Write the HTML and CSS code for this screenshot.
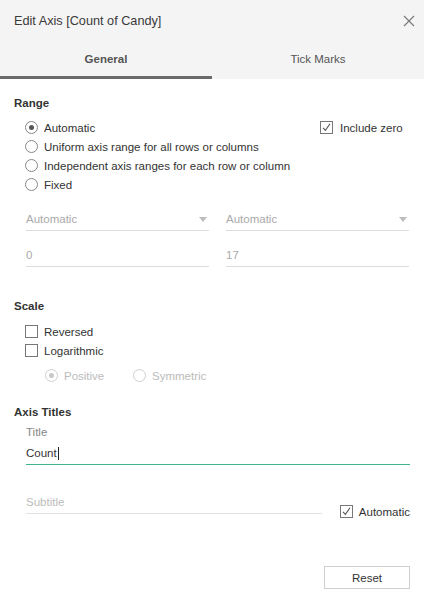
FILE: index.html
```html
<!DOCTYPE html>
<html>
<head>
<meta charset="utf-8">
<link rel="stylesheet" href="styles.css">
</head>
<body>
<div class="dialog">
  <div class="header">
    <div class="titlebar">
      <span class="title">Edit Axis [Count of Candy]</span>
      <svg class="close" width="12" height="12" viewBox="0 0 12 12"><path d="M1 1 L11 11 M11 1 L1 11" stroke="#777" stroke-width="1.1" fill="none"/></svg>
    </div>
    <div class="tabs">
      <div class="tab active">General</div>
      <div class="tab">Tick Marks</div>
    </div>
  </div>
  <div class="content">
    <div class="section-title range-title">Range</div>
    <div class="options">
      <div class="row">
        <span class="radio checked"></span><span>Automatic</span>
        <span class="right-check"><span class="checkbox checked"><svg width="11" height="11" viewBox="0 0 11 11"><path d="M2 5.8 L4.4 8.4 L9 1.8" stroke="#555" stroke-width="1.1" fill="none"/></svg></span><span>Include zero</span></span>
      </div>
      <div class="row"><span class="radio"></span><span>Uniform axis range for all rows or columns</span></div>
      <div class="row"><span class="radio"></span><span>Independent axis ranges for each row or column</span></div>
      <div class="row"><span class="radio"></span><span>Fixed</span></div>
    </div>
    <div class="field-row first">
      <div class="field dropdown"><span>Automatic</span><span class="arrow"></span></div>
      <div class="field dropdown"><span>Automatic</span><span class="arrow"></span></div>
    </div>
    <div class="field-row second">
      <div class="field">0</div>
      <div class="field">17</div>
    </div>

    <div class="section-title scale-title">Scale</div>
    <div class="options checks">
      <div class="row"><span class="checkbox"></span><span>Reversed</span></div>
      <div class="row"><span class="checkbox"></span><span>Logarithmic</span></div>
    </div>
    <div class="sub-radios">
      <span class="sub-opt"><span class="radio checked disabled"></span><span>Positive</span></span>
      <span class="sub-opt"><span class="radio disabled"></span><span>Symmetric</span></span>
    </div>

    <div class="section-title axis-title">Axis Titles</div>
    <div class="label">Title</div>
    <div class="field focused">Count<span class="caret"></span></div>
    <div class="subtitle-row">
      <div class="field subtitle">Subtitle</div>
      <span class="auto-check"><span class="checkbox checked"><svg width="11" height="11" viewBox="0 0 11 11"><path d="M2 5.8 L4.4 8.4 L9 1.8" stroke="#555" stroke-width="1.1" fill="none"/></svg></span><span>Automatic</span></span>
    </div>
    <div class="footer">
      <button class="reset">Reset</button>
    </div>
  </div>
</div>
</body>
</html>
```

FILE: styles.css
```css
* { box-sizing: border-box; }
html, body { margin: 0; padding: 0; background: #fff; }
body {
  font-family: "Liberation Sans", Arial, sans-serif;
  font-size: 11.5px;
  color: #333;
}
.dialog { width: 424px; height: 600px; display: flex; flex-direction: column; }
.header { background: #f4f4f4; }
.titlebar {
  height: 41px;
  display: flex;
  align-items: center;
  justify-content: space-between;
  padding: 0 9px 0 14px;
}
.title { font-size: 12.7px; color: #3a3a3a; }
.close { display: block; }
.tabs { display: flex; height: 38px; }
.tab {
  flex: 1;
  display: flex;
  align-items: center;
  justify-content: center;
  color: #555;
  border-bottom: 3px solid transparent;
}
.tab.active { font-weight: bold; border-bottom-color: #6a6a6a; }

.content { padding: 0 14px; display: flex; flex-direction: column; }
.section-title { font-weight: bold; line-height: 16px; height: 16px; color: #333; }
.range-title { margin-top: 16px; }
.options { margin-top: 7px; padding-left: 11px; }
.row { display: flex; align-items: center; height: 19px; }
.row > span:nth-child(2) { margin-left: 6px; }

.radio {
  width: 13px; height: 13px;
  border: 1px solid #888;
  border-radius: 50%;
  display: inline-flex;
  align-items: center;
  justify-content: center;
  flex: none;
  background: #fff;
}
.radio.checked::after {
  content: "";
  width: 5px; height: 5px;
  border-radius: 50%;
  background: #555;
}
.radio.disabled { border-color: #cfcfcf; }
.radio.disabled.checked::after { background: #c8c8c8; }

.checkbox {
  width: 13px; height: 13px;
  border: 1px solid #777;
  display: inline-flex;
  align-items: center;
  justify-content: center;
  flex: none;
  background: #fff;
}
.checkbox svg { display: block; }

.right-check {
  margin-left: auto;
  width: 90px;
  display: flex;
  align-items: center;
  gap: 7px;
}

.field-row {
  display: grid;
  grid-template-columns: 183px 183px;
  column-gap: 17px;
  padding-left: 12px;
}
.field-row.first { margin-top: 14px; }
.field-row.second { margin-top: 13px; }
.field {
  height: 23px;
  line-height: 22px;
  border-bottom: 1px solid #dcdcdc;
  color: #aaa;
}
.dropdown { display: flex; align-items: center; justify-content: space-between; padding-right: 2px; }
.arrow {
  width: 0; height: 0;
  border-left: 4px solid transparent;
  border-right: 4px solid transparent;
  border-top: 5px solid #bdbdbd;
}

.scale-title { margin-top: 31px; }
.checks { margin-top: 8px; }
.sub-radios { margin-top: 6px; padding-left: 31px; display: flex; align-items: center; height: 19px; color: #bbb; }
.sub-opt { display: flex; align-items: center; gap: 6px; }
.sub-opt:first-child { width: 88px; }

.axis-title { margin-top: 19px; }
.label { margin-top: 4px; line-height: 16px; padding-left: 12px; color: #888; }
.field.focused {
  margin-top: 2px;
  margin-left: 12px;
  border-bottom-color: #3db68e;
  color: #333;
  display: flex;
  align-items: center;
}
.caret { width: 1px; height: 13px; background: #222; margin-left: 1px; }

.subtitle-row { margin-top: 26px; display: flex; align-items: flex-start; padding-left: 12px; }
.field.subtitle { width: 296px; color: #bbb; border-bottom-color: #e3e3e3; }
.auto-check { margin-left: 18px; margin-top: 11px; height: 19px; display: flex; align-items: center; gap: 6px; }

.footer { margin-top: 45px; display: flex; justify-content: flex-end; }
.reset {
  width: 86px; height: 23px;
  border: 1px solid #cfcfcf;
  background: #fff;
  font-family: "Liberation Sans", Arial, sans-serif;
  font-size: 11.5px;
  color: #333;
  padding: 0;
}
```
